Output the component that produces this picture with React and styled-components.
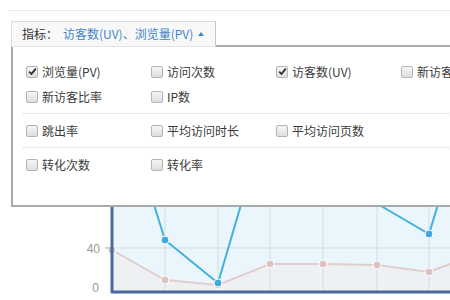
import styled, { createGlobalStyle } from 'styled-components';

const GlobalStyle = createGlobalStyle`
  html, body {
    margin: 0;
    padding: 0;
    background: #fff;
  }
  body {
    font-family: 'Noto Sans CJK SC', 'Noto Sans', sans-serif;
    font-size: 12px;
    color: #333;
  }
`;

const Page = styled.div`
  position: relative;
  width: 450px;
  height: 300px;
  overflow: hidden;
`;

const TopRule = styled.div`
  margin: 10px 0 0 8px;
  border-top: 1px solid #ececec;
`;

const TabBar = styled.div`
  display: flex;
  padding: 10px 0 0 11px;
`;

const Tab = styled.div`
  position: relative;
  z-index: 2;
  display: flex;
  align-items: center;
  height: 24px;
  padding: 0 11px 0 10px;
  border: 1px solid #dcdcdc;
  border-right-color: #c8c8c8;
  border-bottom-color: #e4e4e4;
  background: #f8f8f8;
  font-size: 12px;
  line-height: 24px;
`;

const TabLabel = styled.span`
  color: #333;
`;

const TabValue = styled.span`
  margin-left: 5px;
  color: #3d86c9;
`;

const Caret = styled.span`
  margin-left: 5px;
  width: 0;
  height: 0;
  border-left: 3.5px solid transparent;
  border-right: 3.5px solid transparent;
  border-bottom: 4px solid #3d86c9;
`;

const Dropdown = styled.div`
  position: absolute;
  z-index: 1;
  left: 11px;
  top: 45px;
  width: 520px;
  height: 150px;
  padding-top: 8px;
  border: 2px solid #aaa;
  background: #fff;
`;

const Section = styled.div`
  margin-left: 10px;
  padding: 4px 0 4px 3px;
  border-bottom: ${p => (p.$last ? 'none' : '1px dotted #d8d8d8')};
  display: grid;
  grid-template-columns: repeat(4, 125px);
  grid-auto-rows: 25px;
`;

const Option = styled.label`
  display: flex;
  align-items: center;
  gap: 4px;
  height: 25px;
  color: #3a3a3a;
  font-size: 12px;
  white-space: nowrap;
`;

const Box = styled.span`
  display: flex;
  align-items: center;
  justify-content: center;
  width: 10px;
  height: 10px;
  border: 1px solid #b4b4b4;
  border-radius: 2px;
  background: linear-gradient(#f6f6f6, #dedede);
`;

const ChartSvg = styled.svg`
  display: block;
`;

const CheckBox = ({ checked }) => (
  <Box>
    {checked && (
      <svg width="9" height="9" viewBox="0 0 9 9">
        <path d="M1.2 4.6 L3.5 7 L7.8 1.6" fill="none" stroke="#2b2b2b" strokeWidth="1.8" />
      </svg>
    )}
  </Box>
);

const sections = [
  [
    ['浏览量(PV)', true],
    ['访问次数', false],
    ['访客数(UV)', true],
    ['新访客数', false],
    ['新访客比率', false],
    ['IP数', false],
  ],
  [
    ['跳出率', false],
    ['平均访问时长', false],
    ['平均访问页数', false],
  ],
  [
    ['转化次数', false],
    ['转化率', false],
  ],
];

const blueLine = [
  [112, 70], [165, 240], [218, 283], [270, 106], [323, 150], [376, 203], [429, 234], [482, 60],
];
const grayLine = [
  [112, 250], [165, 280], [218, 285], [270, 264], [323, 264], [377, 265], [429, 272], [482, 252],
];
const gridX = [165, 218, 270, 323, 377, 429];

const toPath = pts => pts.map((p, i) => `${i ? 'L' : 'M'}${p[0]} ${p[1]}`).join(' ');

const Chart = () => (
  <ChartSvg width="450" height="253" viewBox="0 47 450 253">
    <rect x="112" y="47" width="340" height="245" fill="#eaf6fc" />
    <path d={`${toPath(grayLine)} L482 292 L112 292 Z`} fill="#eef1f4" />
    {gridX.map(x => (
      <line key={x} x1={x} y1="47" x2={x} y2="292" stroke="#d3dbe3" strokeWidth="1" />
    ))}
    <line x1="112" y1="248" x2="450" y2="248" stroke="#d3dbe3" strokeWidth="1" />
    <line x1="112" y1="205" x2="450" y2="205" stroke="#d3dbe3" strokeWidth="1" />
    <path d={toPath(grayLine)} fill="none" stroke="#e2cdcd" strokeWidth="2" />
    {grayLine.map(([x, y]) => (
      <circle key={x} cx={x} cy={y} r="4" fill="#dcc2c2" stroke="#fff" strokeWidth="1" />
    ))}
    <path d={toPath(blueLine)} fill="none" stroke="#45b0de" strokeWidth="2" />
    {blueLine.map(([x, y]) => (
      <circle key={x} cx={x} cy={y} r="4" fill="#43a6dc" stroke="#fff" strokeWidth="1" />
    ))}
    <line x1="112" y1="47" x2="112" y2="293" stroke="#4a6a9e" strokeWidth="3" />
    <line x1="111" y1="292" x2="450" y2="292" stroke="#4a6a9e" strokeWidth="3" />
    <line x1="105" y1="248" x2="110" y2="248" stroke="#aaa" strokeWidth="1" />
    <text x="100" y="253" textAnchor="end" fontSize="12" fill="#999" fontFamily="Liberation Sans, sans-serif">40</text>
    <text x="99" y="292" textAnchor="end" fontSize="12" fill="#999" fontFamily="Liberation Sans, sans-serif">0</text>
  </ChartSvg>
);

const App = () => {
  return (
    <>
      <GlobalStyle />
      <Page>
        <TopRule />
        <TabBar>
          <Tab>
            <TabLabel>指标：</TabLabel>
            <TabValue>访客数(UV)、浏览量(PV)</TabValue>
            <Caret />
          </Tab>
        </TabBar>
        <Chart />
        <Dropdown>
          {sections.map((items, i) => (
            <Section key={i} $last={i === sections.length - 1}>
              {items.map(([name, checked]) => (
                <Option key={name}>
                  <CheckBox checked={checked} />
                  {name}
                </Option>
              ))}
            </Section>
          ))}
        </Dropdown>
      </Page>
    </>
  );
};

export default App;
